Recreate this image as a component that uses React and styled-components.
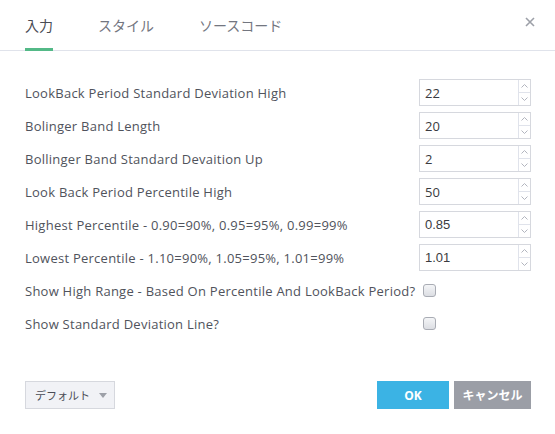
import React from "react";
import styled, { createGlobalStyle } from "styled-components";

const GlobalStyle = createGlobalStyle`
  body {
    margin: 0;
    background: #fff;
    font-family: "Open Sans", "Noto Sans CJK JP", sans-serif;
  }
`;

const inputs = [
  { label: "LookBack Period Standard Deviation High", value: "22" },
  { label: "Bolinger Band Length", value: "20" },
  { label: "Bollinger Band Standard Devaition Up", value: "2" },
  { label: "Look Back Period Percentile High", value: "50" },
  { label: "Highest Percentile - 0.90=90%, 0.95=95%, 0.99=99%", value: "0.85", arial: true },
  { label: "Lowest Percentile - 1.10=90%, 1.05=95%, 1.01=99%", value: "1.01", arial: true },
];

const checks = [
  "Show High Range - Based On Percentile And LookBack Period?",
  "Show Standard Deviation Line?",
];

const App = () => {
  return (
    <Dialog>
      <GlobalStyle />
      <Header>
        <Tab $active>入力</Tab>
        <Tab>スタイル</Tab>
        <Tab>ソースコード</Tab>
        <Close>
          <svg width="10" height="10" viewBox="0 0 10 10">
            <path d="M1 1L9 9M9 1L1 9" stroke="#9da0a8" strokeWidth="1.6" />
          </svg>
        </Close>
      </Header>
      <Body>
        {inputs.map((r) => (
          <Row key={r.label}>
            <Label>{r.label}</Label>
            <Spin>
              <Field $arial={r.arial}>{r.value}</Field>
              <Arrows>
                <Arrow>
                  <svg width="7" height="4" viewBox="0 0 7 4">
                    <path d="M0.5 3.5L3.5 0.5L6.5 3.5" fill="none" stroke="#b2b5be" />
                  </svg>
                </Arrow>
                <Arrow $down>
                  <svg width="7" height="4" viewBox="0 0 7 4">
                    <path d="M0.5 0.5L3.5 3.5L6.5 0.5" fill="none" stroke="#b2b5be" />
                  </svg>
                </Arrow>
              </Arrows>
            </Spin>
          </Row>
        ))}
        {checks.map((c) => (
          <Row key={c}>
            <Label>{c}</Label>
            <CheckCell>
              <Check />
            </CheckCell>
          </Row>
        ))}
      </Body>
      <Footer>
        <Preset>
          デフォルト
          <Caret />
        </Preset>
        <Actions>
          <Btn $kind="ok">OK</Btn>
          <Btn>キャンセル</Btn>
        </Actions>
      </Footer>
    </Dialog>
  );
};

export default App;

const Dialog = styled.div`
  width: 555px;
  height: 434px;
  display: flex;
  flex-direction: column;
  background: #fff;
`;

const Header = styled.div`
  height: 51px;
  box-sizing: border-box;
  border-bottom: 1px solid #e0e3eb;
  display: flex;
  align-items: stretch;
  padding-left: 25px;
  gap: 45px;
  position: relative;
`;

const Tab = styled.div`
  display: flex;
  align-items: center;
  font-size: 14px;
  color: ${(p) => (p.$active ? "#4a4c55" : "#737680")};
  border-bottom: 3px solid ${(p) => (p.$active ? "#53b987" : "transparent")};
  margin-bottom: -1px;
  padding-top: 1px;
`;

const Close = styled.div`
  position: absolute;
  right: 20px;
  top: 17px;
  display: flex;
`;

const Body = styled.div`
  padding: 25px 24px 0 25px;
  display: flex;
  flex-direction: column;
  flex: 1;
`;

const Row = styled.div`
  height: 33px;
  display: flex;
  align-items: center;
  justify-content: space-between;
`;

const Label = styled.div`
  font-size: 13px;
  letter-spacing: 0.25px;
  color: #50535c;
  white-space: nowrap;
`;

const Spin = styled.div`
  width: 112px;
  height: 27px;
  box-sizing: border-box;
  border: 1px solid #d6d8de;
  display: flex;
`;

const Field = styled.div`
  flex: 1;
  display: flex;
  align-items: center;
  padding-left: 5px;
  font-size: 13px;
  color: #3a3b40;
  font-family: ${(p) => (p.$arial ? '"Liberation Sans", sans-serif' : '"Open Sans", sans-serif')};
`;

const Arrows = styled.div`
  width: 11px;
  border-left: 1px solid #e0e3eb;
  display: flex;
  flex-direction: column;
`;

const Arrow = styled.div`
  flex: 1;
  display: flex;
  align-items: center;
  justify-content: center;
  border-top: ${(p) => (p.$down ? "1px solid #e0e3eb" : "none")};
`;

const CheckCell = styled.div`
  width: 112px;
  display: flex;
  padding-left: 4px;
  box-sizing: border-box;
`;

const Check = styled.div`
  width: 11px;
  height: 11px;
  border: 1px solid #a9acb4;
  border-radius: 3px;
  background: linear-gradient(#f4f5f7, #dcdee3);
`;

const Footer = styled.div`
  display: flex;
  justify-content: space-between;
  align-items: center;
  padding: 0 24px 25px 25px;
`;

const Preset = styled.div`
  width: 90px;
  height: 28px;
  box-sizing: border-box;
  border: 1px solid #d6d8de;
  background: #f1f2f6;
  display: flex;
  align-items: center;
  justify-content: center;
  gap: 9px;
  padding-left: 2px;
  font-size: 11px;
  color: #4a4c55;
`;

const Caret = styled.span`
  width: 0;
  height: 0;
  border-left: 4px solid transparent;
  border-right: 4px solid transparent;
  border-top: 5px solid #9da0a8;
`;

const Actions = styled.div`
  display: flex;
  gap: 5px;
`;

const Btn = styled.div`
  height: 28px;
  width: ${(p) => (p.$kind === "ok" ? "72px" : "77px")};
  display: flex;
  align-items: center;
  justify-content: center;
  font-size: 12px;
  font-weight: bold;
  color: #fff;
  background: ${(p) => (p.$kind === "ok" ? "#3bb3e4" : "#9b9ea6")};
`;
